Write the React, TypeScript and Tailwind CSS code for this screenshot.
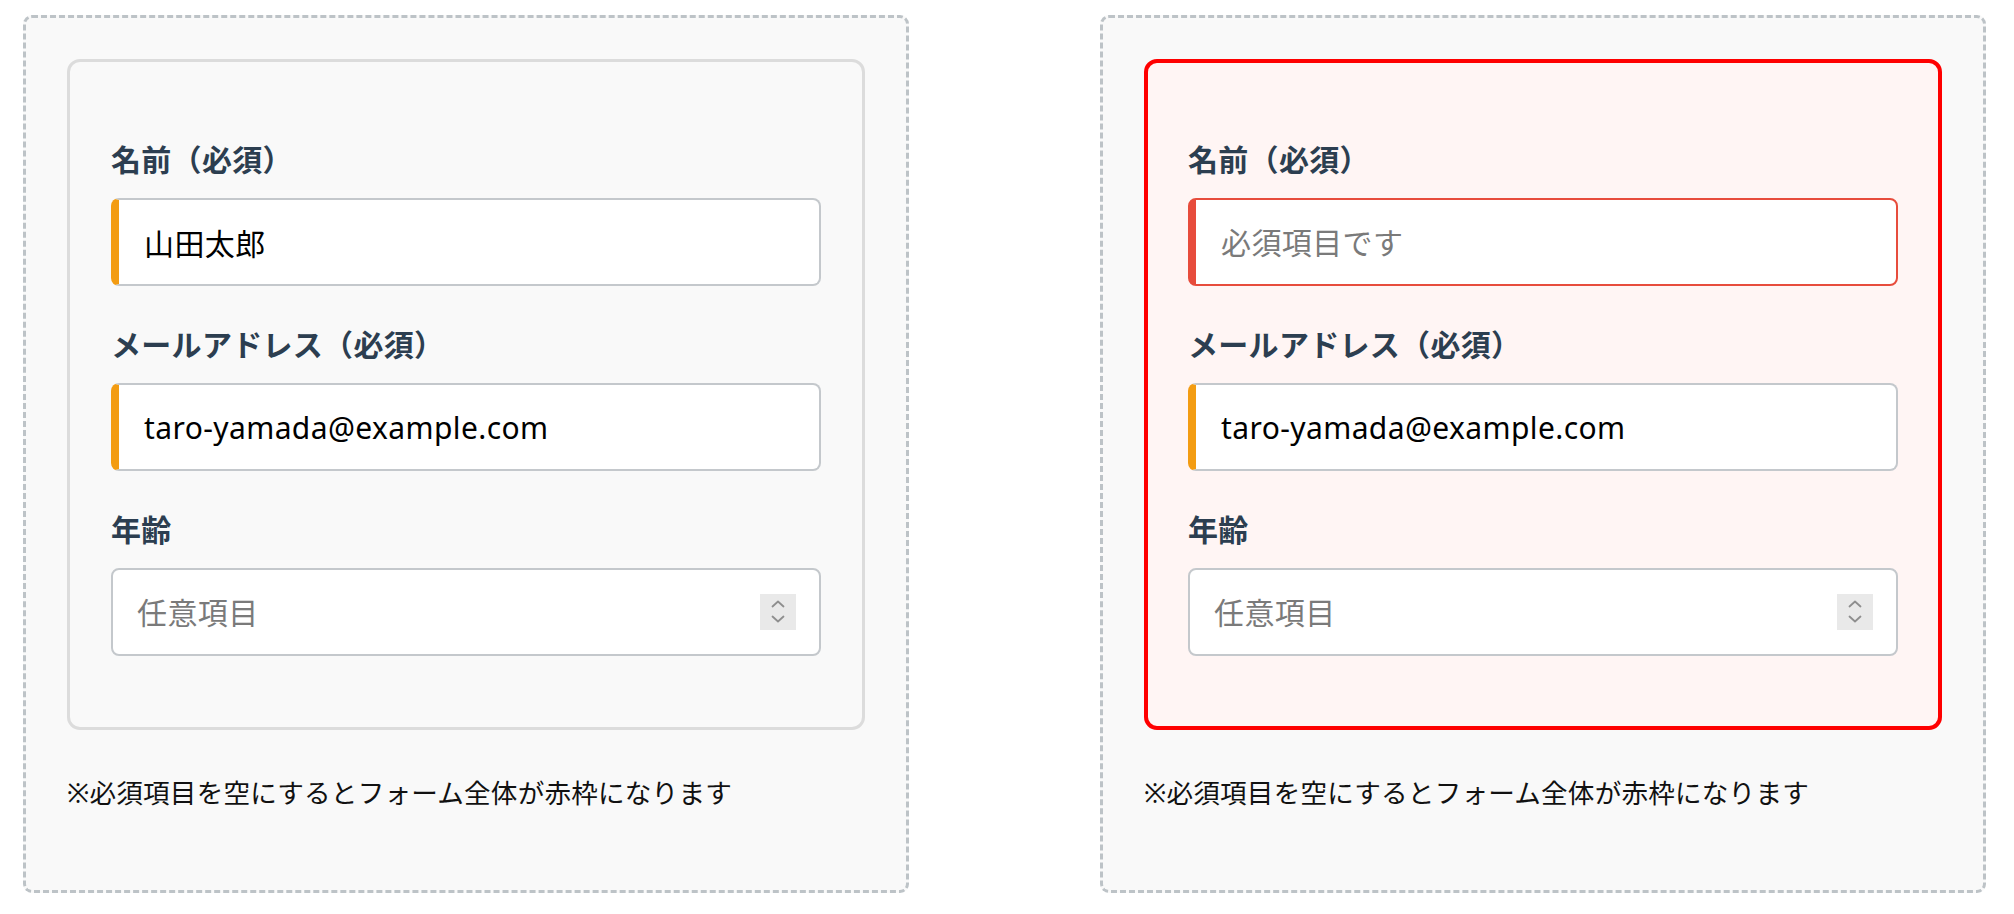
import React from "react";

type FieldProps = {
  label: string;
  children: React.ReactNode;
};

function Field({ label, children }: FieldProps) {
  return (
    <div className="flex flex-col">
      <label className="mb-[16px] block text-[30px] font-bold leading-[44px] tracking-[0.3px] text-[#2c3e50]">{label}</label>
      {children}
    </div>
  );
}

function TextInput({ value, placeholder, tone }: { value?: string; placeholder?: string; tone: "ok" | "error" }) {
  const cls =
    tone === "error"
      ? "border-[#e74c3c] border-l-[#e74c3c]"
      : "border-[#c4c8cc] border-l-[#f39c12]";
  return (
    <input
      type="text"
      readOnly
      value={value ?? ""}
      placeholder={placeholder}
      className={`h-[88px] w-full rounded-[8px] border-2 border-l-[8px] bg-white pl-[25px] pr-[20px] text-[30px] tracking-[0.4px] text-black outline-none placeholder:text-[#7a7a7a] ${cls}`}
    />
  );
}

function Spinner() {
  return (
    <div className="flex h-[36px] w-[36px] shrink-0 items-center justify-center bg-[#e9e9e9]">
      <svg width="36" height="36" viewBox="0 0 36 36" fill="none" stroke="#8e8e8e" strokeWidth="1.8" strokeLinecap="round" strokeLinejoin="round">
        <path d="M12.5 12.5 L18 7.5 L23.5 12.5" />
        <path d="M12.5 22.5 L18 27.5 L23.5 22.5" />
      </svg>
    </div>
  );
}

function AgeInput() {
  return (
    <div className="flex h-[88px] w-full items-center rounded-[8px] border-2 border-[#c4c8cc] bg-white pl-[24px] pr-[23px]">
      <input
        type="text"
        readOnly
        placeholder="任意項目"
        className="min-w-0 flex-1 bg-transparent text-[30px] tracking-[0.4px] text-black outline-none placeholder:text-[#7a7a7a]"
      />
      <Spinner />
    </div>
  );
}

function FormCard({ error }: { error?: boolean }) {
  return (
    <div
      className={
        error
          ? "flex flex-col gap-[37px] rounded-[13px] border-[4px] border-[#ff0000] bg-[#fff5f4] px-[40px] pb-[70px] pt-[75px]"
          : "flex flex-col gap-[37px] rounded-[13px] border-[3px] border-[#dcdcdc] bg-[#f9f9f9] px-[41px] pb-[71px] pt-[76px]"
      }
    >
      <Field label="名前（必須）">
        {error ? <TextInput tone="error" placeholder="必須項目です" /> : <TextInput tone="ok" value="山田太郎" />}
      </Field>
      <Field label="メールアドレス（必須）">
        <TextInput tone="ok" value="taro-yamada@example.com" />
      </Field>
      <Field label="年齢">
        <AgeInput />
      </Field>
    </div>
  );
}

function DemoBox({ error }: { error?: boolean }) {
  return (
    <div className="flex h-[878px] w-[886px] shrink-0 flex-col rounded-[9px] border-[3px] border-dashed border-[#bdc3c7] bg-[#f9f9f9] p-[41px]">
      <FormCard error={error} />
      <p className="mt-[43px] text-[26.6px] leading-[40px] tracking-[0.2px] text-[#111]">※必須項目を空にするとフォーム全体が赤枠になります</p>
    </div>
  );
}

export default function App() {
  return (
    <div className="min-h-screen bg-white font-['Noto_Sans','Noto_Sans_CJK_JP',sans-serif]">
      <div className="flex gap-[191px] pl-[23px] pt-[15px]">
        <DemoBox />
        <DemoBox error />
      </div>
    </div>
  );
}
